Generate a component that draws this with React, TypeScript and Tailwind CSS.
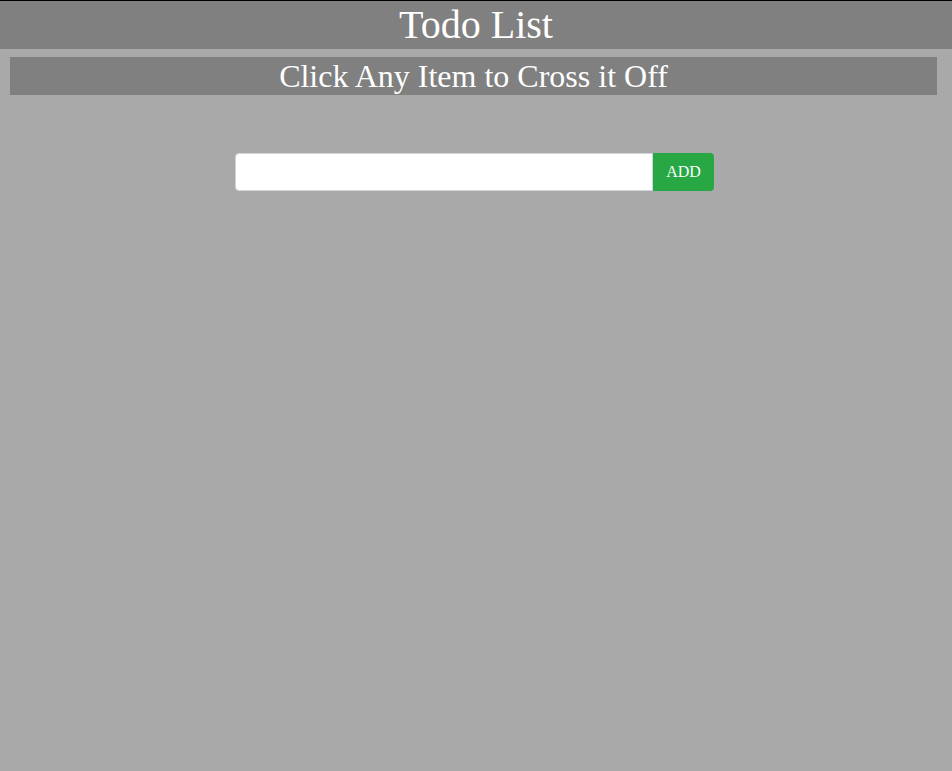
export default function App() {
  return (
    <div className="min-h-[771px] bg-[#a9a9a9] font-['Liberation_Serif',serif] text-white">
      <header className="flex h-[49px] items-center justify-center border-t border-black bg-[#808080] text-[40px] leading-none">
        Todo List
      </header>
      <div className="ml-[10px] mr-[15px] mt-[8px] flex h-[38px] items-center justify-center bg-[#808080] text-[32px] leading-none">
        Click Any Item to Cross it Off
      </div>
      <form
        className="mt-[58px] flex justify-center"
        onSubmit={(e) => e.preventDefault()}
      >
        <div className="ml-[-3px] flex">
          <input
            type="text"
            className="h-[38px] w-[418px] rounded-l-[4px] border border-[#ced4da] bg-white px-3 text-black outline-none"
          />
          <button
            type="submit"
            className="h-[38px] w-[61px] rounded-r-[4px] bg-[#28a745] text-[16px] text-white"
          >
            ADD
          </button>
        </div>
      </form>
    </div>
  )
}
